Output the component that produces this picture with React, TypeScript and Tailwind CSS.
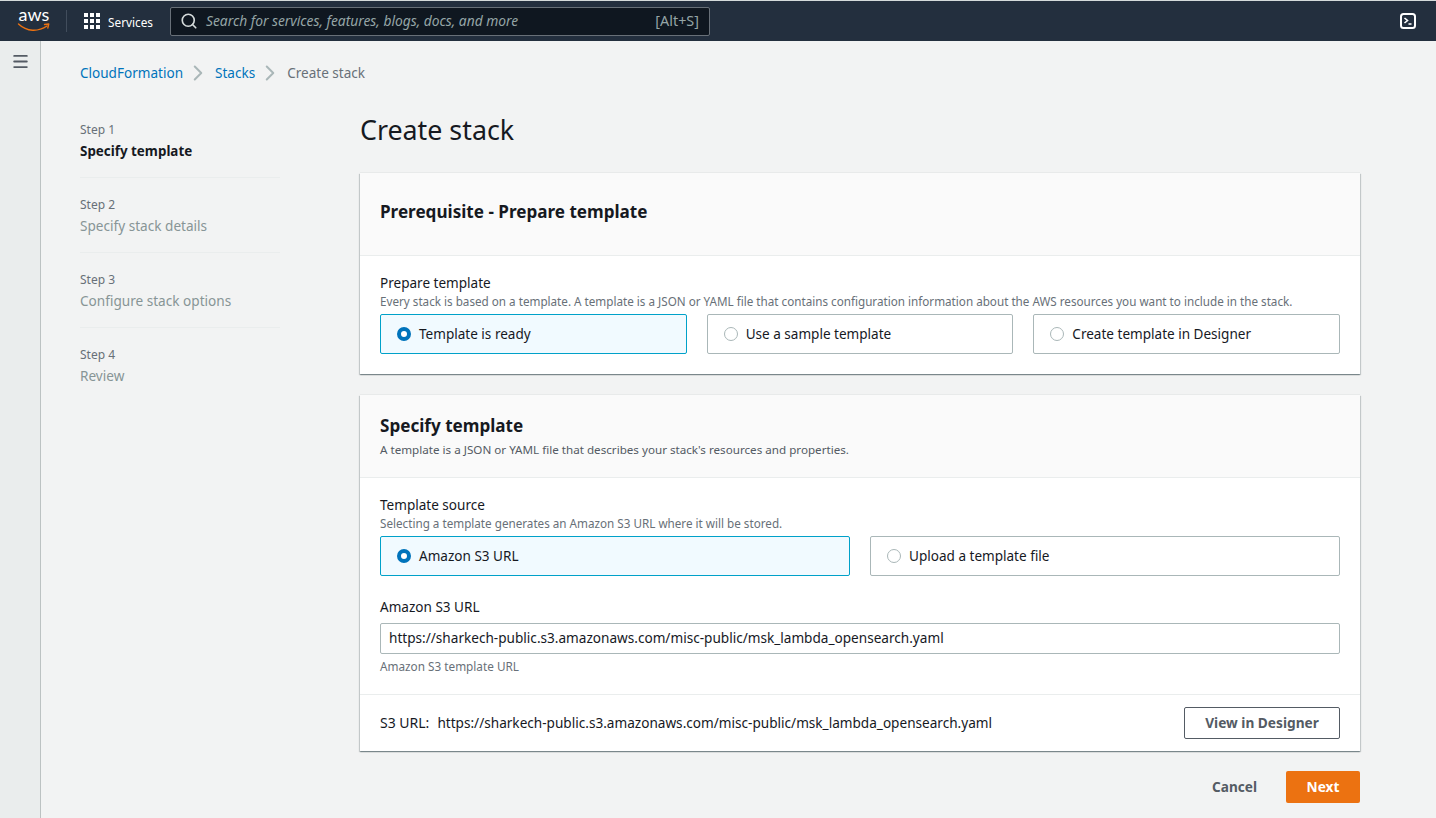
import React from "react";
import { Search, Menu, ChevronRight } from "lucide-react";

function AwsLogo() {
  return (
    <svg width="32" height="22" viewBox="0 0 32 22" fill="none" className="overflow-visible shrink-0">
      <text x="0.5" y="11" fontFamily="Lato, sans-serif" fontSize="18" fill="#ffffff">aws</text>
      <path d="M0.500 14C9 22 20 22 29 16" stroke="#ec7211" strokeWidth="1.400" strokeLinecap="round" />
      <path d="M26.500 14.500L30.800 14L29.800 18" stroke="#ec7211" strokeWidth="1.300" strokeLinecap="round" strokeLinejoin="round" />
    </svg>
  );
}

function Grid() {
  return (
    <div className="grid grid-cols-3 gap-[2px] w-[16px] h-[16px]">
      {Array.from({ length: 9 }).map((_, i) => (
        <div key={i} className="w-[4px] h-[4px] bg-white" />
      ))}
    </div>
  );
}

function Radio({ checked }: { checked?: boolean }) {
  return checked ? (
    <span className="w-[14px] h-[14px] rounded-full border-[4px] border-[#0073bb] bg-white shrink-0" />
  ) : (
    <span className="w-[14px] h-[14px] rounded-full border border-[#aab7b8] bg-white shrink-0" />
  );
}

function Tile({ label, checked, className }: { label: string; checked?: boolean; className: string }) {
  return (
    <div
      className={
        checked
          ? `h-[40px] flex items-center gap-[8px] pl-[16px] border border-[#00a1c9] bg-[#f1faff] rounded-[2px] ${className}`
          : `h-[40px] flex items-center gap-[8px] pl-[16px] border border-[#aab7b8] bg-white rounded-[2px] ${className}`
      }
    >
      <Radio checked={checked} />
      <span className="text-[13.55px] leading-[22px] text-[#16191f]">{label}</span>
    </div>
  );
}

function Step({ n, label, active, last }: { n: number; label: string; active?: boolean; last?: boolean }) {
  return (
    <div className={last ? "h-[75px] pt-[19px]" : "h-[75px] pt-[19px] border-b border-[#eaeded]"}>
      <div className="text-[12px] leading-[16px] text-[#687078]">Step {n}</div>
      <div className={active ? "mt-[2px] text-[13.4px] leading-[22px] font-bold text-[#16191f]" : "mt-[2px] text-[13.6px] leading-[22px] text-[#879596]"}>{label}</div>
    </div>
  );
}

export default function App() {
  return (
    <div className="w-[1436px] h-[818px] overflow-hidden bg-[#f2f3f3] flex flex-col font-['Noto_Sans',sans-serif]">
      <div className="h-[1px] bg-[#d5dbdb] shrink-0" />
      <header className="h-[40px] shrink-0 bg-[#232f3e] flex items-center pl-[18px] pr-[20px]">
        <AwsLogo />
        <div className="w-px h-[22px] bg-[#414d5c] ml-[16px]" />
        <div className="ml-[17px]"><Grid /></div>
        <span className="ml-[8px] text-[11.8px] leading-[16px] mt-[1px] text-white">Services</span>
        <div className="ml-[17px] w-[540px] h-[29px] bg-[#0f1720] border border-[#687078] rounded-[2px] flex items-center pl-[9px] pr-[10px]">
          <Search size={18} strokeWidth={2.2} className="text-[#d5dbdb]" />
          <span className="ml-[8px] text-[13.8px] italic text-[#95a5a6]">Search for services, features, blogs, docs, and more</span>
          <span className="ml-auto text-[14.4px] text-[#95a5a6]">[Alt+S]</span>
        </div>
        <svg className="ml-auto" width="16" height="16" viewBox="0 0 16 16" fill="none">
          <rect x="1" y="1" width="14" height="14" rx="2.500" stroke="#fff" strokeWidth="2" />
          <path d="M4.500 5l3 2.500-3 2.500M8.500 11h3" stroke="#fff" strokeWidth="1.600" />
        </svg>
      </header>
      <div className="flex-1 flex min-h-0">
        <aside className="w-[41px] shrink-0 bg-[#eaeded] border-r border-[#bcc2c2] flex justify-center pt-[11px]">
          <Menu size={19} strokeWidth={2.3} className="text-[#545b64]" />
        </aside>
        <main className="flex-1 min-w-0 pl-[39px] pr-[76px]">
          <nav className="h-[22px] mt-[21px] flex items-center text-[13.55px]">
            <span className="text-[#0073bb]">CloudFormation</span>
            <ChevronRight size={26} strokeWidth={1.85} className="text-[#aab7b8] ml-[2px] mr-[4px]" />
            <span className="text-[#0073bb]">Stacks</span>
            <ChevronRight size={26} strokeWidth={1.85} className="text-[#aab7b8] ml-[2px] mr-[4px]" />
            <span className="text-[#687078]">Create stack</span>
          </nav>
          <div className="flex mt-[19px]">
            <div className="w-[200px] shrink-0">
              <Step n={1} label="Specify template" active />
              <Step n={2} label="Specify stack details" />
              <Step n={3} label="Configure stack options" />
              <Step n={4} label="Review" last />
            </div>
            <div className="ml-[80px] flex-1 min-w-0">
              <h1 className="mt-[9px] text-[26.8px] leading-[36px] text-[#16191f]">Create stack</h1>
              <section className="mt-[25px] bg-white shadow-[0_1px_1px_0_rgba(0,28,36,0.3),1px_1px_1px_0_rgba(0,28,36,0.15),-1px_1px_1px_0_rgba(0,28,36,0.15),0_-1px_0_0_rgba(0,28,36,0.04)]">
                <div className="h-[83px] bg-[#fafafa] border-b border-[#eaeded] px-[20px] pt-[25px]">
                  <h2 className="text-[17.1px] leading-[28px] font-bold text-[#16191f]">Prerequisite - Prepare template</h2>
                </div>
                <div className="h-[118px] px-[20px] pt-[16px]">
                  <div className="text-[13.55px] leading-[22px] text-[#16191f]">Prepare template</div>
                  <div className="text-[11.68px] leading-[16px] text-[#687078]">Every stack is based on a template. A template is a JSON or YAML file that contains configuration information about the AWS resources you want to include in the stack.</div>
                  <div className="mt-[4px] flex gap-[20px]">
                    <Tile label="Template is ready" checked className="flex-1" />
                    <Tile label="Use a sample template" className="flex-1" />
                    <Tile label="Create template in Designer" className="flex-1" />
                  </div>
                </div>
              </section>
              <section className="mt-[21px] bg-white shadow-[0_1px_1px_0_rgba(0,28,36,0.3),1px_1px_1px_0_rgba(0,28,36,0.15),-1px_1px_1px_0_rgba(0,28,36,0.15),0_-1px_0_0_rgba(0,28,36,0.04)]">
                <div className="h-[83px] bg-[#fafafa] border-b border-[#eaeded] px-[20px] pt-[17px]">
                  <h2 className="text-[17.1px] leading-[28px] font-bold text-[#16191f]">Specify template</h2>
                  <div className="text-[11.65px] leading-[16px] text-[#545b64] mt-[2px]">A template is a JSON or YAML file that describes your stack's resources and properties.</div>
                </div>
                <div className="h-[217px] px-[20px] pt-[16px] border-b border-[#eaeded]">
                  <div className="text-[13.55px] leading-[22px] text-[#16191f]">Template source</div>
                  <div className="text-[11.68px] leading-[16px] text-[#687078]">Selecting a template generates an Amazon S3 URL where it will be stored.</div>
                  <div className="mt-[4px] flex gap-[20px]">
                    <Tile label="Amazon S3 URL" checked className="flex-1" />
                    <Tile label="Upload a template file" className="flex-1" />
                  </div>
                  <div className="mt-[20px] text-[13.55px] leading-[22px] text-[#16191f]">Amazon S3 URL</div>
                  <div className="mt-[5px] h-[31px] border border-[#aab7b8] rounded-[2px] flex items-center pl-[8px] text-[13.6px] text-[#16191f]">https://sharkech-public.s3.amazonaws.com/misc-public/msk_lambda_opensearch.yaml</div>
                  <div className="mt-[3px] text-[11.75px] leading-[18px] text-[#687078]">Amazon S3 template URL</div>
                </div>
                <div className="h-[56px] px-[20px] flex items-center justify-between">
                  <div className="text-[13.6px] text-[#16191f]"><span className="text-[14px]">S3 URL:</span><span className="ml-[8px]">https://sharkech-public.s3.amazonaws.com/misc-public/msk_lambda_opensearch.yaml</span></div>
                  <div className="w-[156px] h-[32px] border border-[#545b64] rounded-[2px] flex items-center justify-center text-[13.7px] font-bold text-[#545b64]">View in Designer</div>
                </div>
              </section>
              <div className="mt-[20px] flex justify-end items-center">
                <span className="text-[13.6px] font-bold text-[#545b64]">Cancel</span>
                <div className="ml-[29px] w-[74px] h-[32px] bg-[#ec7211] rounded-[2px] flex items-center justify-center text-[13.7px] font-bold text-white">Next</div>
              </div>
            </div>
          </div>
        </main>
      </div>
    </div>
  );
}
